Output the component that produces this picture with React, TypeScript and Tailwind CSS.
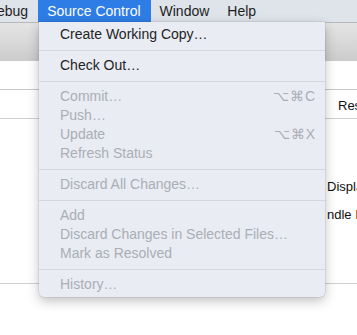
import React from "react";

type Item =
  | { kind: "sep" }
  | { kind: "item"; label: string; shortcut?: string; disabled?: boolean };

const items: Item[] = [
  { kind: "item", label: "Create Working Copy…" },
  { kind: "sep" },
  { kind: "item", label: "Check Out…" },
  { kind: "sep" },
  { kind: "item", label: "Commit…", shortcut: "⌥⌘C", disabled: true },
  { kind: "item", label: "Push…", disabled: true },
  { kind: "item", label: "Update", shortcut: "⌥⌘X", disabled: true },
  { kind: "item", label: "Refresh Status", disabled: true },
  { kind: "sep" },
  { kind: "item", label: "Discard All Changes…", disabled: true },
  { kind: "sep" },
  { kind: "item", label: "Add", disabled: true },
  { kind: "item", label: "Discard Changes in Selected Files…", disabled: true },
  { kind: "item", label: "Mark as Resolved", disabled: true },
  { kind: "sep" },
  { kind: "item", label: "History…", disabled: true },
];

const font = { fontFamily: '"Liberation Sans", Arial, sans-serif' };

export default function App() {
  return (
    <div className="relative w-[357px] h-[335px] overflow-hidden bg-white text-[14px] whitespace-nowrap" style={font}>
      {/* menu bar */}
      <div className="flex h-[22px] items-center bg-[#dfe3ea] text-[#1e1e1e]">
        <span className="-ml-[3px] pr-[10px]">ebug</span>
        <span className="flex h-full items-center bg-[#2e7de6] pl-[9px] pr-[10px] text-white">Source Control</span>
        <span className="pl-[9px] pr-[12px]">Window</span>
        <span className="pl-[6px]">Help</span>
      </div>

      {/* window behind */}
      <div className="border-t border-[#b9b9b9]">
        <div className="h-[38px] bg-gradient-to-b from-[#e4e4e4] via-[#d9d9d9] to-[#cbcbcb]" />
        <div className="h-[28px] bg-white" />
        <div className="h-[29px] border-t border-[#c8c8c8] bg-white pl-[338px] pt-[6px] text-[13px] text-[#111]">Res</div>
        <div className="border-t border-[#d0d0d0]" />
        <div className="pl-[327px] pt-[54px] text-[13px] leading-[28px] text-[#111]">
          <div>Displa</div>
          <div>ndle Ic</div>
        </div>
        <div className="mt-[54px] border-t border-[#d0d0d0]" />
      </div>

      {/* dropdown menu */}
      <div className="absolute left-[39px] top-[22px] w-[286px] rounded-b-[5px] bg-[#e9ecf3] py-[3px] shadow-[0_4px_12px_rgba(0,0,0,0.25),0_0_0_0.5px_rgba(0,0,0,0.12)]">
        {items.map((it, i) =>
          it.kind === "sep" ? (
            <div key={i} className="flex h-[12px] items-center">
              <div className="h-px w-full bg-[#d4d7de]" />
            </div>
          ) : (
            <div
              key={i}
              className={`flex h-[19px] items-center justify-between pl-[21px] pr-[9px] ${
                it.disabled ? "text-[#abaeb5]" : "text-[#242424]"
              }`}
            >
              <span>{it.label}</span>
              {it.shortcut && <span className="tracking-[1px]">{it.shortcut}</span>}
            </div>
          )
        )}
      </div>
    </div>
  );
}
